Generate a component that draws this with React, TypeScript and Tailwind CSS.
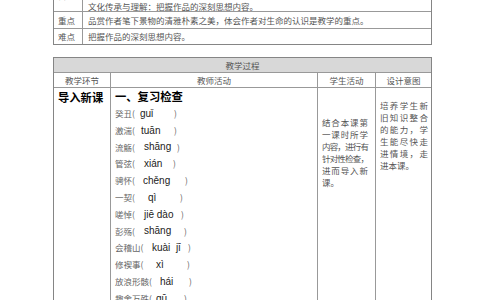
const cjk = "font-['Noto_Sans_CJK_SC',sans-serif]";

const pinyinRows: [string, number, string, number][] = [
  ["癸丑(", 139, "guǐ", 173],
  ["激湍(", 140, "tuān", 173],
  ["流觞(", 143, "shāng", 176],
  ["管弦(", 143, "xián", 172],
  ["骋怀(", 142, "chěng", 184],
  ["一契(", 147, "qì", 179],
  ["嗟悼(", 143, "jiē dào", 180],
  ["彭殇(", 143, "shāng", 183],
  ["会稽山(", 151, "kuài  jī", 187],
  ["修禊事(", 155, "xì", 186],
  ["放浪形骸(", 159, "hái", 188],
  ["趣舍万殊(", 155, "qū", 183],
];

const JustLines = ({ lines }: { lines: string[] }) => (
  <div>
    {lines.map((l, i) => (
      <div
        key={i}
        className={`h-[12px] whitespace-nowrap leading-[12px] ${
          i < lines.length - 1 ? "text-justify [text-align-last:justify]" : ""
        } ${l.length > 5 ? "tracking-[-0.9px]" : ""}`}
      >
        {l}
      </div>
    ))}
  </div>
);

export default function App() {
  return (
    <div className={`w-[484px] h-[300px] overflow-hidden bg-white ${cjk} text-[8.5px] text-[#555]`}>
      <div className="ml-[53px] w-[379px]">
        {/* top table (continues from previous page) */}
        <div className="-mt-[24px] border-x-[1.5px] border-b-[1.5px] border-[#858585]">
          <div className="flex h-[35px]">
            <div className="w-[29px] shrink-0 border-r border-[#999] pl-[4px] pt-[13px] leading-[12px]">目标</div>
            <div className="flex-1 pl-[5px] pt-[12px] leading-[12px]">
              <div>审美鉴赏与创造：感受作者的情感变化。</div>
              <div>文化传承与理解：把握作品的深刻思想内容。</div>
            </div>
          </div>
          <div className="flex h-[17px] border-t border-[#999] leading-[16px]">
            <div className="w-[29px] shrink-0 border-r border-[#999] pl-[4px]">重点</div>
            <div className="flex-1 pl-[5px]">品赏作者笔下景物的清雅朴素之美，体会作者对生命的认识是教学的重点。</div>
          </div>
          <div className="flex h-[16px] border-t border-[#999] leading-[15px]">
            <div className="w-[29px] shrink-0 border-r border-[#999] pl-[4px]">难点</div>
            <div className="flex-1 pl-[5px]">把握作品的深刻思想内容。</div>
          </div>
        </div>

        {/* teaching process table */}
        <div className="mt-[12px] h-[260px] border-x-[1.5px] border-t-[1.5px] border-[#858585]">
          <div className="h-[14px] bg-[#d8d8d8] text-center leading-[14px]">教学过程</div>
          <div className="grid h-[15px] grid-cols-[56px_207px_58px_1fr] border-t border-[#999] text-center leading-[14px]">
            <div>教学环节</div>
            <div className="border-l border-[#999]">教师活动</div>
            <div className="border-l border-[#999]">学生活动</div>
            <div className="border-l border-[#999]">设计意图</div>
          </div>
          <div className="grid h-[240px] grid-cols-[56px_207px_58px_1fr] border-t border-[#999]">
            <div className="pl-[4px] pt-[1px] text-[11.3px] font-bold leading-[16px] text-black">导入新课</div>
            <div className="border-l border-[#999] pl-[4px]">
              <div className="h-[17px] text-[11.3px] font-bold leading-[16px] text-black">一、复习检查</div>
              {pinyinRows.map(([label, px, py, close]) => (
                <div key={label} className="flex h-[16.8px] items-center">
                  <span className="shrink-0 text-[#666]" style={{ width: px - 114 }}>
                    {label}
                  </span>
                  <span
                    className="shrink-0 whitespace-pre font-['Liberation_Sans',sans-serif] text-[10px] text-[#222]"
                    style={{ width: close - px }}
                  >
                    {py}
                  </span>
                  <span className="text-[#666]">)</span>
                </div>
              ))}
            </div>
            <div className="border-l border-[#999] pl-[4px] pt-[28px]">
              <div className="w-[46px]">
                <JustLines lines={["结合本课第", "一课时所学", "内容，进行有", "针对性检查，", "进而导入新", "课。"]} />
              </div>
            </div>
            <div className="border-l border-[#999] pl-[4px] pt-[11px]">
              <div className="w-[48px]">
                <JustLines lines={["培养学生新", "旧知识整合", "的能力，学", "生能尽快走", "进情境，走", "进本课。"]} />
              </div>
            </div>
          </div>
        </div>
      </div>
    </div>
  );
}
